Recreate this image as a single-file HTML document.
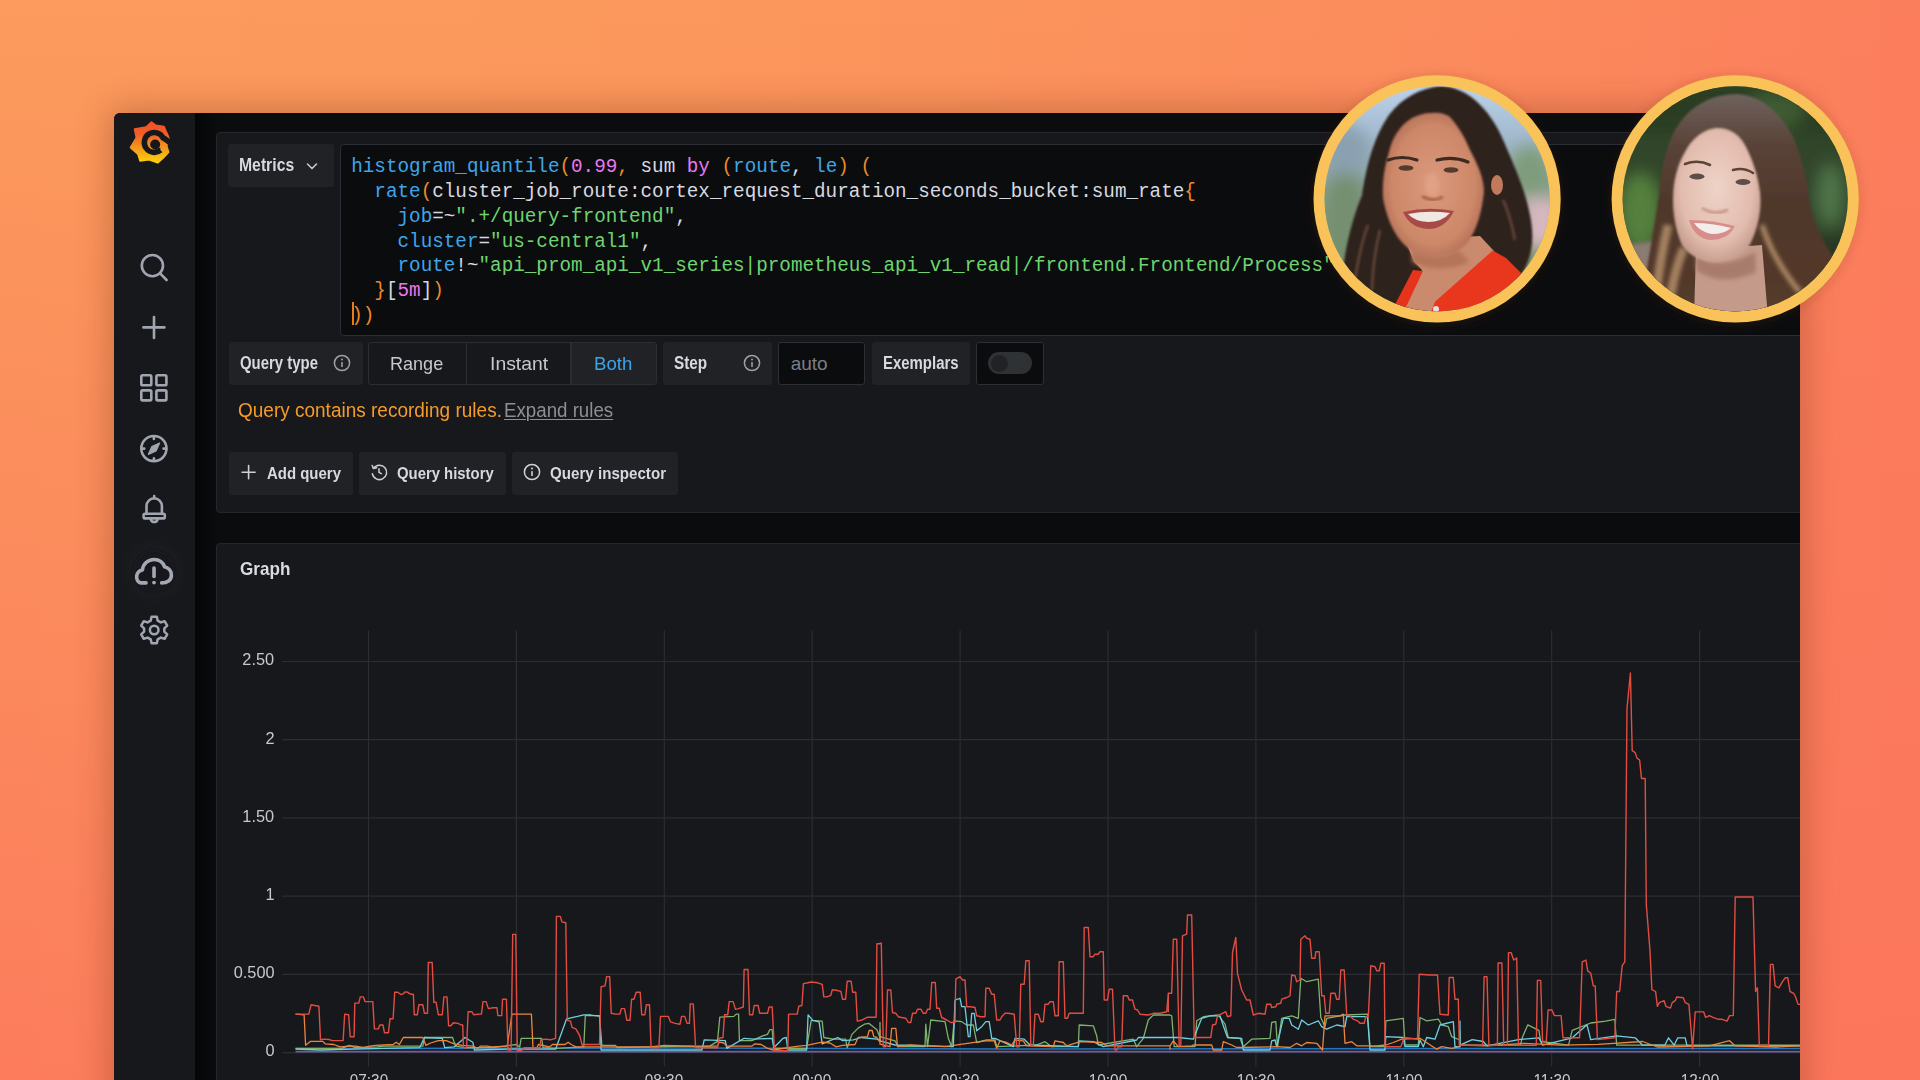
<!DOCTYPE html>
<html><head><meta charset="utf-8">
<style>
*{margin:0;padding:0;box-sizing:border-box}
html,body{width:1920px;height:1080px;overflow:hidden}
body{position:relative;font-family:"Liberation Sans",sans-serif;background:linear-gradient(to bottom right,#fa985c 0%,#fb8b5c 28%,#fc7f5c 52%,#fb775b 100%)}
.b{position:absolute}
.t{position:absolute;white-space:pre}
#code .f{color:#3ea6e8} #code .o{color:#ec8a2a} #code .n{color:#e979ee} #code .s{color:#6fd46e}
</style></head><body>
<svg class="b" style="left:0;top:0" width="1920" height="1080"><defs><linearGradient id="g0" x1="0" y1="0" x2="0" y2="1"><stop offset="0" stop-color="rgb(251,155,92)"/><stop offset="1" stop-color="rgb(252,124,92)"/></linearGradient><linearGradient id="g1" x1="0" y1="0" x2="0" y2="1"><stop offset="0" stop-color="rgb(251,155,92)"/><stop offset="1" stop-color="rgb(252,125,92)"/></linearGradient><linearGradient id="g2" x1="0" y1="0" x2="0" y2="1"><stop offset="0" stop-color="rgb(251,155,92)"/><stop offset="1" stop-color="rgb(252,125,92)"/></linearGradient><linearGradient id="g3" x1="0" y1="0" x2="0" y2="1"><stop offset="0" stop-color="rgb(251,155,92)"/><stop offset="1" stop-color="rgb(252,126,92)"/></linearGradient><linearGradient id="g4" x1="0" y1="0" x2="0" y2="1"><stop offset="0" stop-color="rgb(251,155,92)"/><stop offset="1" stop-color="rgb(252,126,92)"/></linearGradient><linearGradient id="g5" x1="0" y1="0" x2="0" y2="1"><stop offset="0" stop-color="rgb(251,155,92)"/><stop offset="1" stop-color="rgb(252,126,92)"/></linearGradient><linearGradient id="g6" x1="0" y1="0" x2="0" y2="1"><stop offset="0" stop-color="rgb(251,154,92)"/><stop offset="1" stop-color="rgb(252,127,92)"/></linearGradient><linearGradient id="g7" x1="0" y1="0" x2="0" y2="1"><stop offset="0" stop-color="rgb(251,154,92)"/><stop offset="1" stop-color="rgb(252,127,92)"/></linearGradient><linearGradient id="g8" x1="0" y1="0" x2="0" y2="1"><stop offset="0" stop-color="rgb(251,154,92)"/><stop offset="1" stop-color="rgb(252,128,92)"/></linearGradient><linearGradient id="g9" x1="0" y1="0" x2="0" y2="1"><stop offset="0" stop-color="rgb(251,154,92)"/><stop offset="1" stop-color="rgb(252,128,92)"/></linearGradient><linearGradient id="g10" x1="0" y1="0" x2="0" y2="1"><stop offset="0" stop-color="rgb(251,154,92)"/><stop offset="1" stop-color="rgb(252,128,92)"/></linearGradient><linearGradient id="g11" x1="0" y1="0" x2="0" y2="1"><stop offset="0" stop-color="rgb(251,154,92)"/><stop offset="1" stop-color="rgb(252,128,92)"/></linearGradient><linearGradient id="g12" x1="0" y1="0" x2="0" y2="1"><stop offset="0" stop-color="rgb(251,153,92)"/><stop offset="1" stop-color="rgb(252,129,92)"/></linearGradient><linearGradient id="g13" x1="0" y1="0" x2="0" y2="1"><stop offset="0" stop-color="rgb(251,153,92)"/><stop offset="1" stop-color="rgb(252,129,92)"/></linearGradient><linearGradient id="g14" x1="0" y1="0" x2="0" y2="1"><stop offset="0" stop-color="rgb(251,153,92)"/><stop offset="1" stop-color="rgb(252,129,92)"/></linearGradient><linearGradient id="g15" x1="0" y1="0" x2="0" y2="1"><stop offset="0" stop-color="rgb(251,152,92)"/><stop offset="1" stop-color="rgb(252,129,92)"/></linearGradient><linearGradient id="g16" x1="0" y1="0" x2="0" y2="1"><stop offset="0" stop-color="rgb(251,152,92)"/><stop offset="1" stop-color="rgb(252,129,92)"/></linearGradient><linearGradient id="g17" x1="0" y1="0" x2="0" y2="1"><stop offset="0" stop-color="rgb(251,152,92)"/><stop offset="1" stop-color="rgb(252,129,92)"/></linearGradient><linearGradient id="g18" x1="0" y1="0" x2="0" y2="1"><stop offset="0" stop-color="rgb(251,151,92)"/><stop offset="1" stop-color="rgb(252,129,92)"/></linearGradient><linearGradient id="g19" x1="0" y1="0" x2="0" y2="1"><stop offset="0" stop-color="rgb(251,151,92)"/><stop offset="1" stop-color="rgb(252,129,92)"/></linearGradient><linearGradient id="g20" x1="0" y1="0" x2="0" y2="1"><stop offset="0" stop-color="rgb(251,150,92)"/><stop offset="1" stop-color="rgb(252,129,92)"/></linearGradient><linearGradient id="g21" x1="0" y1="0" x2="0" y2="1"><stop offset="0" stop-color="rgb(251,150,92)"/><stop offset="1" stop-color="rgb(252,129,92)"/></linearGradient><linearGradient id="g22" x1="0" y1="0" x2="0" y2="1"><stop offset="0" stop-color="rgb(251,149,92)"/><stop offset="1" stop-color="rgb(252,129,92)"/></linearGradient><linearGradient id="g23" x1="0" y1="0" x2="0" y2="1"><stop offset="0" stop-color="rgb(251,149,92)"/><stop offset="1" stop-color="rgb(252,129,92)"/></linearGradient><linearGradient id="g24" x1="0" y1="0" x2="0" y2="1"><stop offset="0" stop-color="rgb(251,148,92)"/><stop offset="1" stop-color="rgb(252,129,92)"/></linearGradient><linearGradient id="g25" x1="0" y1="0" x2="0" y2="1"><stop offset="0" stop-color="rgb(251,147,92)"/><stop offset="1" stop-color="rgb(252,129,92)"/></linearGradient><linearGradient id="g26" x1="0" y1="0" x2="0" y2="1"><stop offset="0" stop-color="rgb(251,147,92)"/><stop offset="1" stop-color="rgb(252,128,92)"/></linearGradient><linearGradient id="g27" x1="0" y1="0" x2="0" y2="1"><stop offset="0" stop-color="rgb(251,146,92)"/><stop offset="1" stop-color="rgb(252,128,92)"/></linearGradient><linearGradient id="g28" x1="0" y1="0" x2="0" y2="1"><stop offset="0" stop-color="rgb(251,145,92)"/><stop offset="1" stop-color="rgb(252,128,92)"/></linearGradient><linearGradient id="g29" x1="0" y1="0" x2="0" y2="1"><stop offset="0" stop-color="rgb(251,145,92)"/><stop offset="1" stop-color="rgb(252,128,92)"/></linearGradient><linearGradient id="g30" x1="0" y1="0" x2="0" y2="1"><stop offset="0" stop-color="rgb(251,144,92)"/><stop offset="1" stop-color="rgb(252,127,92)"/></linearGradient><linearGradient id="g31" x1="0" y1="0" x2="0" y2="1"><stop offset="0" stop-color="rgb(251,143,92)"/><stop offset="1" stop-color="rgb(252,127,92)"/></linearGradient><linearGradient id="g32" x1="0" y1="0" x2="0" y2="1"><stop offset="0" stop-color="rgb(251,142,92)"/><stop offset="1" stop-color="rgb(252,127,92)"/></linearGradient><linearGradient id="g33" x1="0" y1="0" x2="0" y2="1"><stop offset="0" stop-color="rgb(251,141,92)"/><stop offset="1" stop-color="rgb(252,126,92)"/></linearGradient><linearGradient id="g34" x1="0" y1="0" x2="0" y2="1"><stop offset="0" stop-color="rgb(251,141,92)"/><stop offset="1" stop-color="rgb(252,126,92)"/></linearGradient><linearGradient id="g35" x1="0" y1="0" x2="0" y2="1"><stop offset="0" stop-color="rgb(251,140,92)"/><stop offset="1" stop-color="rgb(252,125,92)"/></linearGradient><linearGradient id="g36" x1="0" y1="0" x2="0" y2="1"><stop offset="0" stop-color="rgb(251,139,92)"/><stop offset="1" stop-color="rgb(252,125,92)"/></linearGradient><linearGradient id="g37" x1="0" y1="0" x2="0" y2="1"><stop offset="0" stop-color="rgb(251,138,92)"/><stop offset="1" stop-color="rgb(252,124,92)"/></linearGradient><linearGradient id="g38" x1="0" y1="0" x2="0" y2="1"><stop offset="0" stop-color="rgb(251,137,92)"/><stop offset="1" stop-color="rgb(252,124,92)"/></linearGradient><linearGradient id="g39" x1="0" y1="0" x2="0" y2="1"><stop offset="0" stop-color="rgb(251,136,92)"/><stop offset="1" stop-color="rgb(252,123,92)"/></linearGradient><linearGradient id="g40" x1="0" y1="0" x2="0" y2="1"><stop offset="0" stop-color="rgb(251,135,92)"/><stop offset="1" stop-color="rgb(252,123,92)"/></linearGradient><linearGradient id="g41" x1="0" y1="0" x2="0" y2="1"><stop offset="0" stop-color="rgb(251,134,92)"/><stop offset="1" stop-color="rgb(252,122,92)"/></linearGradient><linearGradient id="g42" x1="0" y1="0" x2="0" y2="1"><stop offset="0" stop-color="rgb(251,132,92)"/><stop offset="1" stop-color="rgb(252,121,92)"/></linearGradient><linearGradient id="g43" x1="0" y1="0" x2="0" y2="1"><stop offset="0" stop-color="rgb(251,131,92)"/><stop offset="1" stop-color="rgb(252,121,92)"/></linearGradient><linearGradient id="g44" x1="0" y1="0" x2="0" y2="1"><stop offset="0" stop-color="rgb(251,130,92)"/><stop offset="1" stop-color="rgb(252,120,92)"/></linearGradient><linearGradient id="g45" x1="0" y1="0" x2="0" y2="1"><stop offset="0" stop-color="rgb(251,129,92)"/><stop offset="1" stop-color="rgb(252,119,92)"/></linearGradient><linearGradient id="g46" x1="0" y1="0" x2="0" y2="1"><stop offset="0" stop-color="rgb(251,128,92)"/><stop offset="1" stop-color="rgb(252,118,92)"/></linearGradient><linearGradient id="g47" x1="0" y1="0" x2="0" y2="1"><stop offset="0" stop-color="rgb(251,126,92)"/><stop offset="1" stop-color="rgb(252,118,92)"/></linearGradient></defs><rect x="-0.5" y="0" width="41.0" height="1080" fill="url(#g0)"/><rect x="39.5" y="0" width="41.0" height="1080" fill="url(#g1)"/><rect x="79.5" y="0" width="41.0" height="1080" fill="url(#g2)"/><rect x="119.5" y="0" width="41.0" height="1080" fill="url(#g3)"/><rect x="159.5" y="0" width="41.0" height="1080" fill="url(#g4)"/><rect x="199.5" y="0" width="41.0" height="1080" fill="url(#g5)"/><rect x="239.5" y="0" width="41.0" height="1080" fill="url(#g6)"/><rect x="279.5" y="0" width="41.0" height="1080" fill="url(#g7)"/><rect x="319.5" y="0" width="41.0" height="1080" fill="url(#g8)"/><rect x="359.5" y="0" width="41.0" height="1080" fill="url(#g9)"/><rect x="399.5" y="0" width="41.0" height="1080" fill="url(#g10)"/><rect x="439.5" y="0" width="41.0" height="1080" fill="url(#g11)"/><rect x="479.5" y="0" width="41.0" height="1080" fill="url(#g12)"/><rect x="519.5" y="0" width="41.0" height="1080" fill="url(#g13)"/><rect x="559.5" y="0" width="41.0" height="1080" fill="url(#g14)"/><rect x="599.5" y="0" width="41.0" height="1080" fill="url(#g15)"/><rect x="639.5" y="0" width="41.0" height="1080" fill="url(#g16)"/><rect x="679.5" y="0" width="41.0" height="1080" fill="url(#g17)"/><rect x="719.5" y="0" width="41.0" height="1080" fill="url(#g18)"/><rect x="759.5" y="0" width="41.0" height="1080" fill="url(#g19)"/><rect x="799.5" y="0" width="41.0" height="1080" fill="url(#g20)"/><rect x="839.5" y="0" width="41.0" height="1080" fill="url(#g21)"/><rect x="879.5" y="0" width="41.0" height="1080" fill="url(#g22)"/><rect x="919.5" y="0" width="41.0" height="1080" fill="url(#g23)"/><rect x="959.5" y="0" width="41.0" height="1080" fill="url(#g24)"/><rect x="999.5" y="0" width="41.0" height="1080" fill="url(#g25)"/><rect x="1039.5" y="0" width="41.0" height="1080" fill="url(#g26)"/><rect x="1079.5" y="0" width="41.0" height="1080" fill="url(#g27)"/><rect x="1119.5" y="0" width="41.0" height="1080" fill="url(#g28)"/><rect x="1159.5" y="0" width="41.0" height="1080" fill="url(#g29)"/><rect x="1199.5" y="0" width="41.0" height="1080" fill="url(#g30)"/><rect x="1239.5" y="0" width="41.0" height="1080" fill="url(#g31)"/><rect x="1279.5" y="0" width="41.0" height="1080" fill="url(#g32)"/><rect x="1319.5" y="0" width="41.0" height="1080" fill="url(#g33)"/><rect x="1359.5" y="0" width="41.0" height="1080" fill="url(#g34)"/><rect x="1399.5" y="0" width="41.0" height="1080" fill="url(#g35)"/><rect x="1439.5" y="0" width="41.0" height="1080" fill="url(#g36)"/><rect x="1479.5" y="0" width="41.0" height="1080" fill="url(#g37)"/><rect x="1519.5" y="0" width="41.0" height="1080" fill="url(#g38)"/><rect x="1559.5" y="0" width="41.0" height="1080" fill="url(#g39)"/><rect x="1599.5" y="0" width="41.0" height="1080" fill="url(#g40)"/><rect x="1639.5" y="0" width="41.0" height="1080" fill="url(#g41)"/><rect x="1679.5" y="0" width="41.0" height="1080" fill="url(#g42)"/><rect x="1719.5" y="0" width="41.0" height="1080" fill="url(#g43)"/><rect x="1759.5" y="0" width="41.0" height="1080" fill="url(#g44)"/><rect x="1799.5" y="0" width="41.0" height="1080" fill="url(#g45)"/><rect x="1839.5" y="0" width="41.0" height="1080" fill="url(#g46)"/><rect x="1879.5" y="0" width="41.0" height="1080" fill="url(#g47)"/></svg>
<div class="b" style="left:114px;top:113px;width:1686px;height:1000px;border-radius:6px 0 0 0;box-shadow:0 0 34px 4px rgba(110,45,15,.33)"></div>
<div class="b" style="left:0;top:0;width:1800px;height:1080px;overflow:hidden">
<div class="b" style="left:114px;top:113px;width:1686px;height:1000px;background:#0b0c0e;border-radius:6px 0 0 0"></div>
<div class="b" style="left:114px;top:113px;width:80.5px;height:1000px;background:#17181c;border-radius:6px 0 0 0"></div>
<div class="b" style="left:194.5px;top:113px;width:24px;height:1000px;background:linear-gradient(to right,#040505,#090a0c 60%,#0b0c0e)"></div>
<div class="b" style="left:216px;top:131.5px;width:1600px;height:381.5px;background:#17181c;border:1px solid #25272b;border-radius:4px"></div>
<div class="b" style="left:228px;top:143.5px;width:106px;height:43.5px;background:#202226;border-radius:3px"></div>
<div class="t" style="left:238.5px;top:157.49px;font-size:17.5px;line-height:17.5px;color:#d8d9e0;font-weight:bold;font-family:'Liberation Sans';transform:scaleX(0.9);transform-origin:0 0;">Metrics</div>
<svg class="b" style="left:304px;top:158px" width="16" height="16" viewBox="0 0 16 16"><path d="M3.5 6 L8 10.5 L12.5 6" stroke="#c7c8cf" stroke-width="1.6" fill="none" stroke-linecap="round" stroke-linejoin="round"/></svg>
<div class="b" style="left:340px;top:143.5px;width:1470px;height:192px;background:#0b0c0e;border:1.5px solid #2a2d33;border-radius:4px"></div>
<div class="b" style="left:351.2px;top:155px;font-family:'Liberation Mono';font-size:19.3px;line-height:24.85px;white-space:pre;color:#d8d9e0" id="code"><span class="f">histogram_quantile</span><span class="o">(</span><span class="n">0.99</span><span class="o">,</span> sum <span class="n">by</span> <span class="o">(</span><span class="f">route</span>, <span class="f">le</span><span class="o">)</span> <span class="o">(</span>
  <span class="f">rate</span><span class="o">(</span>cluster_job_route:cortex_request_duration_seconds_bucket:sum_rate<span class="o">{</span>
    <span class="f">job</span>=~<span class="s">".+/query-frontend"</span>,
    <span class="f">cluster</span>=<span class="s">"us-central1"</span>,
    <span class="f">route</span>!~<span class="s">"api_prom_api_v1_series|prometheus_api_v1_read|/frontend.Frontend/Process"</span>
  <span class="o">}</span>[<span class="n">5m</span>]<span class="o">)</span>
<span class="o">))</span></div>
<div class="b" style="left:352px;top:302px;width:1.6px;height:23px;background:#eb7b18"></div>
<div class="b" style="left:228.5px;top:341.5px;width:134px;height:43.5px;background:#202226;border-radius:3px"></div>
<div class="t" style="left:239.6px;top:354.06px;font-size:18px;line-height:18px;color:#d8d9e0;font-weight:bold;font-family:'Liberation Sans';transform:scaleX(0.83);transform-origin:0 0;">Query type</div>
<svg class="b" style="left:332.1px;top:353.2px" width="20" height="20" viewBox="0 0 20 20"><circle cx="10" cy="10" r="7.6" stroke="#9fa0a7" stroke-width="1.5" fill="none"/><rect x="9.2" y="9" width="1.6" height="5" rx=".6" fill="#9fa0a7"/><circle cx="10" cy="6.6" r="1" fill="#9fa0a7"/></svg>
<div class="b" style="left:367.5px;top:341.5px;width:289px;height:43.5px;background:#17181c;border:1.5px solid #2a2d32;border-radius:3px"></div>
<div class="b" style="left:571px;top:343px;width:84.5px;height:40.5px;background:#202226;border-radius:0 2px 2px 0"></div>
<div class="b" style="left:465.8px;top:343px;width:1.5px;height:40.5px;background:#2a2d32"></div>
<div class="b" style="left:570.3px;top:343px;width:1.5px;height:40.5px;background:#2a2d32"></div>
<div class="t" style="left:390.3px;top:353.92px;font-size:19px;line-height:19px;color:#c7c8d0;font-weight:normal;font-family:'Liberation Sans';transform:scaleX(0.95);transform-origin:0 0;">Range</div>
<div class="t" style="left:490px;top:353.92px;font-size:19px;line-height:19px;color:#c7c8d0;font-weight:normal;font-family:'Liberation Sans';transform:scaleX(1.02);transform-origin:0 0;">Instant</div>
<div class="t" style="left:593.8px;top:353.92px;font-size:19px;line-height:19px;color:#3ba4ea;font-weight:normal;font-family:'Liberation Sans';transform:scaleX(0.98);transform-origin:0 0;">Both</div>
<div class="b" style="left:663px;top:341.5px;width:109px;height:43.5px;background:#202226;border-radius:3px"></div>
<div class="t" style="left:673.7px;top:354.06px;font-size:18px;line-height:18px;color:#d8d9e0;font-weight:bold;font-family:'Liberation Sans';transform:scaleX(0.85);transform-origin:0 0;">Step</div>
<svg class="b" style="left:741.7px;top:353.2px" width="20" height="20" viewBox="0 0 20 20"><circle cx="10" cy="10" r="7.6" stroke="#9fa0a7" stroke-width="1.5" fill="none"/><rect x="9.2" y="9" width="1.6" height="5" rx=".6" fill="#9fa0a7"/><circle cx="10" cy="6.6" r="1" fill="#9fa0a7"/></svg>
<div class="b" style="left:778.3px;top:341.5px;width:87.2px;height:43.5px;background:#0b0c0e;border:1.5px solid #2c2f35;border-radius:3px"></div>
<div class="t" style="left:790.7px;top:353.92px;font-size:19px;line-height:19px;color:#7d7f86;font-weight:normal;font-family:'Liberation Sans';">auto</div>
<div class="b" style="left:872px;top:341.5px;width:98px;height:43.5px;background:#202226;border-radius:3px"></div>
<div class="t" style="left:882.8px;top:354.06px;font-size:18px;line-height:18px;color:#d8d9e0;font-weight:bold;font-family:'Liberation Sans';transform:scaleX(0.83);transform-origin:0 0;">Exemplars</div>
<div class="b" style="left:976.3px;top:341.5px;width:68px;height:43.5px;background:#0b0c0e;border:1.5px solid #2c2f35;border-radius:3px"></div>
<div class="b" style="left:988px;top:352.3px;width:44.3px;height:22px;background:#2e3235;border-radius:11px"></div>
<div class="b" style="left:990.8px;top:354.8px;width:17px;height:17px;background:#202226;border-radius:50%"></div>
<div class="t" style="left:238.3px;top:400.76px;font-size:19.3px;line-height:19.3px;color:#f49b2a;font-weight:normal;font-family:'Liberation Sans';transform:scaleX(0.985);transform-origin:0 0;">Query contains recording rules.</div>
<div class="t" style="left:503.6px;top:400.76px;font-size:19.3px;line-height:19.3px;color:#8e8f96;font-weight:normal;font-family:'Liberation Sans';transform:scaleX(0.97);transform-origin:0 0;text-decoration:underline;text-decoration-thickness:1.3px;text-underline-offset:2px;">Expand rules</div>
<div class="b" style="left:228.5px;top:451.8px;width:124.5px;height:43.4px;background:#202226;border-radius:3px"></div>
<svg class="b" style="left:240px;top:463px" width="18" height="18" viewBox="0 0 18 18"><path d="M8.6 2.6V15.8M2.1 9.2H15.1" stroke="#cfd0d7" stroke-width="1.6" stroke-linecap="round"/></svg>
<div class="t" style="left:266.6px;top:464.51px;font-size:17px;line-height:17px;color:#d8d9e0;font-weight:bold;font-family:'Liberation Sans';transform:scaleX(0.88);transform-origin:0 0;">Add query</div>
<div class="b" style="left:359.2px;top:451.8px;width:146.5px;height:43.4px;background:#202226;border-radius:3px"></div>
<svg class="b" style="left:369px;top:462px" width="20" height="20" viewBox="0 0 20 20"><path d="M4.6 6.2 A7.2 7.2 0 1 1 3.4 11.8" stroke="#cfd0d7" stroke-width="1.5" fill="none" stroke-linecap="round"/><path d="M3.2 3.4 L4.4 6.6 L7.6 5.8" stroke="#cfd0d7" stroke-width="1.5" fill="none" stroke-linecap="round" stroke-linejoin="round"/><path d="M10 6.8V10.3L12.3 11.6" stroke="#cfd0d7" stroke-width="1.5" fill="none" stroke-linecap="round"/></svg>
<div class="t" style="left:396.7px;top:464.51px;font-size:17px;line-height:17px;color:#d8d9e0;font-weight:bold;font-family:'Liberation Sans';transform:scaleX(0.875);transform-origin:0 0;">Query history</div>
<div class="b" style="left:511.5px;top:451.8px;width:166px;height:43.4px;background:#202226;border-radius:3px"></div>
<svg class="b" style="left:521.8px;top:462.2px" width="20" height="20" viewBox="0 0 20 20"><circle cx="10" cy="10" r="7.6" stroke="#cfd0d7" stroke-width="1.5" fill="none"/><rect x="9.2" y="9" width="1.6" height="5" rx=".6" fill="#cfd0d7"/><circle cx="10" cy="6.6" r="1" fill="#cfd0d7"/></svg>
<div class="t" style="left:550px;top:464.51px;font-size:17px;line-height:17px;color:#d8d9e0;font-weight:bold;font-family:'Liberation Sans';transform:scaleX(0.89);transform-origin:0 0;">Query inspector</div>
<div class="b" style="left:216px;top:542.5px;width:1600px;height:600px;background:#17181c;border:1px solid #25272b;border-radius:4px"></div>
<div class="t" style="left:239.6px;top:559.12px;font-size:19px;line-height:19px;color:#d8dbe3;font-weight:bold;font-family:'Liberation Sans';transform:scaleX(0.9);transform-origin:0 0;">Graph</div>
<div class="t" style="right:1525.5px;top:651.3px;font-size:17px;line-height:17px;color:#c7c8cf;transform:scaleX(0.96);transform-origin:100% 0">2.50</div>
<div class="t" style="right:1525.5px;top:729.5px;font-size:17px;line-height:17px;color:#c7c8cf;transform:scaleX(0.96);transform-origin:100% 0">2</div>
<div class="t" style="right:1525.5px;top:807.7px;font-size:17px;line-height:17px;color:#c7c8cf;transform:scaleX(0.96);transform-origin:100% 0">1.50</div>
<div class="t" style="right:1525.5px;top:886.0px;font-size:17px;line-height:17px;color:#c7c8cf;transform:scaleX(0.96);transform-origin:100% 0">1</div>
<div class="t" style="right:1525.5px;top:964.2px;font-size:17px;line-height:17px;color:#c7c8cf;transform:scaleX(0.96);transform-origin:100% 0">0.500</div>
<div class="t" style="right:1525.5px;top:1042.4px;font-size:17px;line-height:17px;color:#c7c8cf;transform:scaleX(0.96);transform-origin:100% 0">0</div>
<div class="t" style="left:338.5px;width:60px;text-align:center;top:1072px;font-size:17px;line-height:17px;color:#c7c8cf;transform:scaleX(0.9)">07:30</div>
<div class="t" style="left:486.4px;width:60px;text-align:center;top:1072px;font-size:17px;line-height:17px;color:#c7c8cf;transform:scaleX(0.9)">08:00</div>
<div class="t" style="left:634.3px;width:60px;text-align:center;top:1072px;font-size:17px;line-height:17px;color:#c7c8cf;transform:scaleX(0.9)">08:30</div>
<div class="t" style="left:782.2px;width:60px;text-align:center;top:1072px;font-size:17px;line-height:17px;color:#c7c8cf;transform:scaleX(0.9)">09:00</div>
<div class="t" style="left:930.1px;width:60px;text-align:center;top:1072px;font-size:17px;line-height:17px;color:#c7c8cf;transform:scaleX(0.9)">09:30</div>
<div class="t" style="left:1078px;width:60px;text-align:center;top:1072px;font-size:17px;line-height:17px;color:#c7c8cf;transform:scaleX(0.9)">10:00</div>
<div class="t" style="left:1225.9px;width:60px;text-align:center;top:1072px;font-size:17px;line-height:17px;color:#c7c8cf;transform:scaleX(0.9)">10:30</div>
<div class="t" style="left:1373.8px;width:60px;text-align:center;top:1072px;font-size:17px;line-height:17px;color:#c7c8cf;transform:scaleX(0.9)">11:00</div>
<div class="t" style="left:1521.7px;width:60px;text-align:center;top:1072px;font-size:17px;line-height:17px;color:#c7c8cf;transform:scaleX(0.9)">11:30</div>
<div class="t" style="left:1669.6px;width:60px;text-align:center;top:1072px;font-size:17px;line-height:17px;color:#c7c8cf;transform:scaleX(0.9)">12:00</div>
<svg class="b" style="left:0;top:0" width="1800" height="1080" viewBox="0 0 1800 1080"><line x1="282" y1="661.5" x2="1800" y2="661.5" stroke="#2a2d31" stroke-width="1.2"/><line x1="282" y1="739.7" x2="1800" y2="739.7" stroke="#2a2d31" stroke-width="1.2"/><line x1="282" y1="817.9" x2="1800" y2="817.9" stroke="#2a2d31" stroke-width="1.2"/><line x1="282" y1="896.2" x2="1800" y2="896.2" stroke="#2a2d31" stroke-width="1.2"/><line x1="282" y1="974.4" x2="1800" y2="974.4" stroke="#2a2d31" stroke-width="1.2"/><line x1="282" y1="1052.6" x2="1800" y2="1052.6" stroke="#2a2d31" stroke-width="1.2"/><line x1="368.5" y1="630.6" x2="368.5" y2="1066.6" stroke="#2a2d31" stroke-width="1.2"/><line x1="516.4" y1="630.6" x2="516.4" y2="1066.6" stroke="#2a2d31" stroke-width="1.2"/><line x1="664.3" y1="630.6" x2="664.3" y2="1066.6" stroke="#2a2d31" stroke-width="1.2"/><line x1="812.2" y1="630.6" x2="812.2" y2="1066.6" stroke="#2a2d31" stroke-width="1.2"/><line x1="960.1" y1="630.6" x2="960.1" y2="1066.6" stroke="#2a2d31" stroke-width="1.2"/><line x1="1108" y1="630.6" x2="1108" y2="1066.6" stroke="#2a2d31" stroke-width="1.2"/><line x1="1255.9" y1="630.6" x2="1255.9" y2="1066.6" stroke="#2a2d31" stroke-width="1.2"/><line x1="1403.8" y1="630.6" x2="1403.8" y2="1066.6" stroke="#2a2d31" stroke-width="1.2"/><line x1="1551.7" y1="630.6" x2="1551.7" y2="1066.6" stroke="#2a2d31" stroke-width="1.2"/><line x1="1699.6" y1="630.6" x2="1699.6" y2="1066.6" stroke="#2a2d31" stroke-width="1.2"/><path d="M295.5,1051.6 L1800,1051.6" stroke="#705da0" stroke-width="1.6" fill="none" stroke-linejoin="round"/>
<path d="M295.5,1048.5 L700,1048 L1000,1049 L1500,1048.5 L1800,1048.5" stroke="#1f78c1" stroke-width="1.4" fill="none" stroke-linejoin="round"/>
<path d="M295.5,1048.4 L341.6,1048.4 L349.4,1045.3 L355.6,1047.7 L377.5,1046.9 L383.8,1046.1 L422.8,1046.1 L424.4,1037.5 L452.5,1037.5 L455.6,1046.1 L465.0,1047.7 L493.1,1047.7 L516.6,1044.5 L519.7,1046.9 L521.2,1038.3 L541.6,1038.3 L543.1,1047.7 L555.6,1048.4 L583.8,1046.9 L585.3,1015.6 L590.0,1015.6 L590.0,1014.8 L599.5,1016.4 L601.9,1045.3 L615.2,1045.3 L617.5,1047.7 L689.4,1046.1 L698.8,1046.9 L709.7,1046.1 L717.5,1041.4 L719.8,1017.2 L733.9,1016.4 L736.2,1014.1 L738.6,1014.1 L739.4,1040.6 L751.9,1040.6 L762.8,1035.9 L767.5,1034.4 L769.8,1029.7 L772.2,1029.7 L773.8,1048.4 L806.6,1048.4 L811.2,1020.3 L822.2,1021.1 L823.8,1037.5 L833.1,1039.1 L845.6,1039.1 L847.2,1047.7 L851.9,1034.4 L858.1,1028.1 L864.4,1024.2 L869.1,1023.4 L873.8,1027.3 L876.9,1029.7 L880.0,1037.5 L880.0,1022.5 L880.0,1025.8 L880.0,1036.7 L895.0,1040.8 L898.3,1046.7 L925.0,1046.7 L925.8,1024.2 L927.5,1046.7 L930.8,1020.0 L945.0,1021.7 L948.3,1038.3 L951.7,1046.7 L954.2,1020.8 L961.7,1021.7 L966.7,1025.0 L973.3,1025.0 L976.7,1042.5 L986.7,1040.0 L995.0,1040.0 L996.7,1046.7 L1036.7,1045.0 L1045.0,1041.7 L1051.7,1046.7 L1078.3,1046.7 L1079.2,1025.0 L1093.3,1025.8 L1096.7,1035.8 L1098.3,1045.0 L1133.3,1039.2 L1136.7,1046.7 L1143.3,1038.3 L1148.3,1020.0 L1153.3,1015.0 L1170.0,1015.0 L1170.0,1015.0 L1171.7,1015.8 L1174.2,1046.7 L1195.0,1046.7 L1196.7,1020.8 L1203.3,1016.7 L1218.3,1015.0 L1225.0,1024.2 L1228.3,1037.5 L1240.0,1038.3 L1243.3,1046.7 L1251.7,1039.2 L1270.0,1038.3 L1271.7,1022.5 L1275.8,1021.7 L1277.5,1046.7 L1281.7,1018.3 L1291.7,1015.8 L1298.3,1018.3 L1300.8,978.3 L1306.7,981.7 L1318.3,979.2 L1320.8,1017.5 L1325.0,1026.7 L1326.7,1018.3 L1345.0,1015.0 L1367.5,1014.2 L1370.0,1046.7 L1385.0,1046.7 L1385.8,1020.8 L1403.3,1018.3 L1405.0,1045.0 L1418.3,1045.0 L1420.0,1017.5 L1426.7,1020.8 L1438.3,1019.2 L1441.7,1025.0 L1448.3,1026.7 L1451.7,1036.7 L1460.0,1040.0 L1460.0,1030.4 L1460.0,1045.2 L1520.4,1045.2 L1522.2,1037.8 L1527.8,1024.8 L1538.9,1030.4 L1540.7,1041.5 L1568.5,1045.2 L1572.2,1030.4 L1590.7,1023.0 L1605.6,1021.1 L1614.8,1019.3 L1616.7,1045.2 L1800.0,1045.2" stroke="#7eb26d" stroke-width="1.3" fill="none" stroke-linejoin="round"/>
<path d="M295.5,1049.2 L321.2,1050.0 L352.5,1049.2 L383.8,1048.4 L419.7,1047.7 L424.4,1037.5 L442.3,1038.3 L444.7,1047.7 L454.1,1046.9 L465.0,1037.5 L472.8,1042.2 L474.4,1050.0 L508.8,1049.2 L555.6,1049.2 L566.6,1018.8 L577.5,1016.4 L583.8,1014.8 L590.0,1014.8 L590.0,1015.6 L599.5,1015.6 L601.1,1050.0 L701.9,1050.0 L704.2,1039.8 L725.3,1040.6 L726.9,1048.4 L744.1,1038.3 L753.4,1039.1 L772.2,1038.3 L773.8,1047.7 L783.1,1038.3 L786.2,1037.5 L787.8,1050.0 L806.6,1050.0 L808.1,1014.8 L812.8,1020.3 L819.1,1021.9 L822.2,1043.8 L837.8,1037.5 L842.5,1040.6 L853.4,1039.8 L861.2,1037.5 L876.9,1039.1 L880.0,1040.6 L880.0,1036.7 L880.0,1040.8 L895.0,1045.0 L953.3,1046.7 L955.0,1000.0 L960.0,998.3 L961.7,1006.7 L965.0,1006.7 L968.3,1036.7 L970.0,1036.7 L971.7,1013.3 L974.2,1013.3 L976.7,1030.8 L981.7,1026.7 L985.8,1021.7 L989.2,1021.7 L991.7,1038.3 L995.0,1038.3 L1013.3,1046.7 L1015.0,1038.3 L1024.2,1039.2 L1030.0,1045.0 L1078.3,1046.7 L1079.2,1040.8 L1093.3,1041.7 L1103.3,1046.7 L1136.7,1040.0 L1138.3,1037.5 L1170.0,1037.5 L1170.0,1037.5 L1178.3,1037.5 L1193.3,1039.2 L1198.3,1026.7 L1201.7,1018.3 L1210.0,1015.8 L1220.0,1015.8 L1223.3,1025.8 L1227.5,1037.5 L1241.7,1038.3 L1243.3,1050.0 L1270.0,1050.0 L1271.7,1040.8 L1275.0,1040.0 L1276.7,1046.7 L1283.3,1018.3 L1289.2,1018.3 L1291.7,1025.0 L1298.3,1029.2 L1301.7,1020.0 L1308.3,1025.0 L1318.3,1020.8 L1321.7,1026.7 L1326.7,1029.2 L1336.7,1025.0 L1345.0,1026.7 L1346.7,1016.7 L1367.5,1016.7 L1370.0,1050.0 L1385.0,1050.0 L1385.8,1036.7 L1403.3,1037.5 L1405.0,1046.7 L1418.3,1046.7 L1420.0,1040.0 L1423.3,1046.7 L1426.7,1037.5 L1435.0,1039.2 L1440.0,1025.0 L1453.3,1021.7 L1455.0,1046.7 L1460.0,1046.7 L1460.0,1021.1 L1460.0,1045.2 L1472.2,1039.6 L1483.3,1041.5 L1487.0,1045.9 L1518.5,1039.6 L1538.9,1037.8 L1542.6,1045.2 L1572.2,1037.8 L1587.0,1024.8 L1590.7,1039.6 L1616.7,1035.9 L1635.2,1037.8 L1642.6,1045.2 L1664.8,1045.2 L1668.5,1037.8 L1674.1,1045.2 L1677.8,1037.8 L1685.2,1037.8 L1687.0,1045.9 L1800.0,1045.9" stroke="#6ed0e0" stroke-width="1.3" fill="none" stroke-linejoin="round"/>
<path d="M295.5,1014.1 L304.1,1014.8 L305.6,1045.3 L310.3,1041.4 L322.8,1041.4 L325.2,1043.8 L333.8,1044.5 L340.0,1046.9 L349.4,1046.1 L355.6,1046.1 L363.4,1047.7 L369.7,1046.1 L375.9,1045.3 L393.1,1044.5 L396.2,1042.2 L399.4,1044.5 L403.3,1037.5 L422.8,1037.5 L425.9,1045.3 L430.6,1043.0 L438.4,1040.6 L446.2,1040.6 L454.1,1043.8 L461.9,1045.3 L472.8,1046.1 L477.5,1048.4 L480.6,1046.1 L486.9,1046.1 L491.6,1046.9 L507.2,1046.1 L511.9,1014.1 L531.4,1014.1 L533.0,1047.7 L536.9,1047.7 L538.4,1044.5 L549.4,1046.9 L552.5,1044.5 L565.0,1044.5 L568.1,1042.2 L571.2,1044.5 L575.9,1046.9 L590.0,1046.9 L590.0,1046.9 L650.3,1046.9 L664.4,1045.3 L689.4,1046.1 L717.5,1046.1 L719.1,1042.2 L723.8,1043.0 L726.9,1046.1 L751.9,1046.1 L755.0,1043.8 L761.2,1044.5 L767.5,1048.4 L773.8,1050.0 L787.8,1047.7 L798.8,1046.1 L806.6,1045.3 L822.2,1042.2 L830.0,1043.0 L836.2,1046.9 L842.5,1045.3 L855.0,1044.5 L858.1,1037.5 L867.5,1036.7 L869.1,1030.5 L872.2,1030.5 L873.8,1036.7 L876.9,1037.5 L880.0,1042.2 L880.0,1030.0 L880.0,1037.5 L880.0,1044.2 L890.0,1046.7 L891.7,1028.3 L895.8,1028.3 L897.5,1046.7 L910.0,1045.0 L945.0,1046.7 L985.0,1040.8 L994.2,1040.8 L996.7,1048.3 L1000.0,1040.8 L1006.7,1042.5 L1011.7,1045.0 L1015.0,1040.0 L1023.3,1040.8 L1026.7,1045.8 L1053.3,1046.7 L1055.0,1040.8 L1063.3,1042.5 L1066.7,1045.8 L1080.0,1041.7 L1101.7,1042.5 L1106.7,1045.8 L1170.0,1045.8 L1170.0,1049.2 L1170.0,1045.8 L1173.3,1040.8 L1178.3,1046.7 L1191.7,1045.8 L1193.3,1045.0 L1211.7,1045.0 L1213.3,1050.0 L1221.7,1050.0 L1223.3,1041.7 L1231.7,1045.0 L1236.7,1047.5 L1276.7,1046.7 L1290.0,1047.5 L1296.7,1043.3 L1301.7,1045.8 L1306.7,1042.5 L1316.7,1043.3 L1322.5,1050.0 L1325.0,1015.8 L1340.0,1015.8 L1343.3,1014.2 L1345.0,1043.3 L1351.7,1041.7 L1356.7,1045.8 L1376.7,1045.8 L1385.8,1045.0 L1393.3,1042.5 L1401.7,1039.2 L1420.0,1038.3 L1436.7,1049.2 L1441.7,1046.7 L1451.7,1048.3 L1460.0,1046.7 L1460.0,1045.2 L1487.0,1045.9 L1524.1,1043.3 L1561.1,1045.2 L1598.1,1044.4 L1642.6,1041.5 L1657.4,1047.0 L1709.3,1045.9 L1729.6,1040.7 L1735.2,1045.9 L1775.9,1047.0 L1800.0,1045.9" stroke="#ef843c" stroke-width="1.3" fill="none" stroke-linejoin="round"/>
<path d="M295.5,1014.1 L308.8,1014.1 L311.1,1004.7 L315.0,1005.5 L318.9,1006.2 L320.5,1039.8 L324.4,1039.1 L329.1,1039.5 L332.2,1040.6 L343.1,1040.6 L344.7,1014.1 L348.6,1014.8 L350.2,1036.7 L354.1,1036.7 L354.8,1003.1 L358.8,1003.1 L360.3,996.9 L363.4,996.9 L365.0,1001.6 L372.8,1001.6 L374.4,1028.9 L378.3,1028.9 L379.8,1025.0 L383.0,1025.0 L384.5,1032.8 L388.4,1032.8 L390.0,1018.8 L393.1,1018.8 L394.7,992.2 L397.8,992.2 L400.9,994.5 L403.3,993.8 L404.8,991.9 L408.0,992.2 L409.5,993.8 L413.4,994.5 L414.2,1014.8 L417.3,1014.8 L418.9,1004.7 L422.8,1004.7 L424.4,1013.3 L427.5,1013.3 L428.3,962.5 L432.2,962.5 L433.8,1002.3 L436.1,1002.3 L438.4,1014.8 L442.3,1014.8 L443.9,996.9 L447.0,996.9 L448.6,1025.8 L450.9,1025.8 L453.3,1022.7 L458.0,1023.4 L461.1,1025.0 L462.7,1025.0 L463.4,1047.7 L466.6,1047.7 L468.1,1011.7 L472.0,1011.7 L473.6,1014.8 L479.1,1014.1 L481.4,1014.1 L483.0,1001.6 L486.1,1001.6 L488.4,1008.6 L493.1,1007.8 L497.0,1007.8 L497.8,1015.6 L501.7,1015.6 L502.5,999.2 L506.4,999.2 L508.0,1050.0 L511.1,1050.0 L512.7,934.4 L515.8,934.4 L517.3,1050.8 L521.2,1050.8 L524.4,1047.7 L540.0,1047.7 L540.8,1039.8 L545.5,1039.1 L550.2,1039.8 L555.6,1038.3 L556.4,916.4 L560.3,916.4 L561.9,921.9 L565.8,922.7 L567.3,1020.3 L570.5,1021.1 L572.0,1027.3 L575.9,1028.9 L579.8,1035.9 L582.2,1045.3 L582.2,1044.5 L599.5,1044.5 L601.1,986.7 L605.0,985.9 L606.6,976.6 L609.7,976.6 L611.2,1013.3 L615.9,1014.1 L619.8,1014.1 L621.4,1008.6 L624.5,1008.6 L626.9,1020.3 L630.0,1020.3 L631.6,999.2 L633.9,999.2 L636.2,992.2 L640.2,992.2 L641.7,1014.8 L644.8,1014.8 L646.4,1004.7 L649.5,1004.7 L651.1,1047.7 L658.9,1047.7 L660.5,1016.4 L668.3,1016.4 L670.6,1021.9 L675.3,1023.4 L680.0,1024.2 L681.6,1016.4 L684.7,1016.4 L687.0,1023.4 L689.4,1023.4 L690.2,1003.9 L693.3,1003.9 L695.6,1047.7 L717.5,1047.7 L719.1,1038.3 L723.0,1037.5 L724.5,1014.8 L727.7,1014.8 L729.2,1001.6 L733.1,1001.6 L735.5,1009.4 L738.6,1008.6 L743.3,1007.0 L744.1,969.5 L748.0,969.5 L749.5,1014.8 L752.7,1014.8 L754.2,1005.5 L758.1,1005.5 L759.7,1013.3 L767.5,1013.3 L769.1,1007.0 L772.2,1007.0 L774.5,1050.8 L787.8,1050.8 L788.6,1014.1 L797.2,1014.1 L798.8,1006.2 L801.9,1005.5 L803.4,983.6 L808.1,982.8 L811.2,982.0 L817.5,982.8 L822.2,984.4 L823.8,996.9 L826.9,996.9 L830.8,995.3 L832.3,989.8 L836.2,990.3 L840.9,991.4 L842.5,999.2 L845.6,999.2 L847.2,981.2 L851.1,981.2 L852.7,992.2 L855.8,992.2 L857.3,1021.1 L861.2,1020.3 L867.5,1017.2 L876.1,1017.2 L876.9,943.8 L880.0,943.8 L880.0,943.3 L881.3,943.3 L883.3,1046.7 L885.8,1046.7 L887.5,990.0 L890.8,990.0 L892.5,1012.5 L895.8,1013.3 L898.3,1016.7 L901.7,1017.5 L905.8,1018.3 L908.3,1022.5 L910.8,1022.5 L912.5,1013.3 L915.8,1013.3 L917.5,1009.2 L920.8,1009.2 L923.3,1013.3 L925.8,1013.3 L927.5,1009.2 L930.0,1009.2 L931.7,982.5 L935.3,982.5 L936.7,1008.3 L939.2,1008.3 L941.7,1017.5 L946.7,1020.0 L950.8,1022.5 L955.0,1022.5 L955.8,979.2 L960.0,976.7 L962.5,980.0 L965.0,980.0 L966.7,1006.7 L970.8,1006.7 L975.0,1007.5 L976.7,1015.8 L980.8,1016.7 L985.0,1016.7 L985.8,988.3 L989.2,988.3 L991.7,994.2 L994.2,994.2 L996.7,1020.0 L1000.0,1020.0 L1001.7,1016.7 L1005.0,1013.3 L1008.3,1013.3 L1014.2,1014.2 L1016.7,1046.7 L1019.2,1046.7 L1020.8,984.2 L1024.2,984.2 L1025.8,960.8 L1029.2,960.8 L1030.8,1045.8 L1033.3,1045.8 L1035.0,1014.2 L1038.3,1014.2 L1040.8,1021.7 L1043.3,1021.7 L1045.0,1004.2 L1048.3,1004.2 L1050.0,1001.7 L1053.3,1001.7 L1055.0,1015.8 L1058.3,1015.8 L1059.2,961.7 L1063.3,961.7 L1065.0,1018.3 L1067.5,1018.3 L1069.2,1013.3 L1083.3,1013.3 L1084.2,927.5 L1088.3,927.5 L1090.0,956.7 L1093.3,956.7 L1095.0,954.2 L1098.3,954.2 L1100.0,951.7 L1103.3,951.7 L1104.2,1000.0 L1107.5,1000.0 L1109.2,989.2 L1112.5,989.2 L1115.0,1050.0 L1116.7,1050.0 L1118.3,1046.7 L1121.7,1046.7 L1123.3,995.8 L1127.5,995.8 L1129.2,1000.0 L1132.5,1000.0 L1135.0,1009.2 L1137.5,1010.0 L1140.0,1014.2 L1148.3,1015.0 L1153.3,1013.3 L1160.0,1013.3 L1163.3,1012.5 L1166.7,1011.7 L1168.3,993.3 L1168.3,993.3 L1168.3,1011.7 L1168.3,993.3 L1171.7,993.3 L1173.3,939.2 L1176.7,939.2 L1179.2,1045.8 L1180.8,1045.8 L1182.5,935.8 L1186.7,934.2 L1187.5,915.0 L1191.7,915.0 L1194.2,1037.5 L1210.8,1037.5 L1212.5,1025.0 L1215.8,1024.2 L1217.5,1015.8 L1225.8,1011.7 L1227.5,1016.7 L1230.8,1015.8 L1232.5,952.5 L1235.8,937.5 L1237.5,973.3 L1241.7,990.0 L1246.7,1000.0 L1250.0,1000.0 L1253.3,1015.0 L1258.3,1013.3 L1265.0,1014.2 L1266.7,1004.2 L1270.8,1004.2 L1271.7,1007.5 L1275.8,1006.7 L1276.7,1004.2 L1280.8,1003.3 L1281.7,999.2 L1286.7,997.5 L1290.0,995.8 L1291.7,975.0 L1295.0,975.8 L1296.7,981.7 L1300.0,980.0 L1300.8,939.2 L1305.0,935.8 L1306.7,938.3 L1310.0,939.2 L1311.7,958.3 L1315.0,958.3 L1315.8,951.7 L1319.2,951.7 L1321.7,995.8 L1324.2,995.8 L1325.8,1013.3 L1329.2,1013.3 L1330.8,993.3 L1335.0,993.3 L1336.7,999.2 L1339.2,999.2 L1340.8,970.0 L1344.2,970.0 L1346.7,1015.0 L1350.0,1015.8 L1353.3,1019.2 L1357.5,1020.8 L1360.0,1023.3 L1364.2,1023.3 L1365.8,1016.7 L1368.3,1016.7 L1370.8,965.8 L1375.0,966.7 L1376.7,970.8 L1379.2,970.8 L1380.8,963.3 L1384.2,963.3 L1385.0,1046.7 L1400.8,1046.7 L1404.2,1037.5 L1417.5,1039.2 L1419.2,974.2 L1429.2,975.0 L1437.5,975.0 L1440.0,1014.2 L1448.3,1015.0 L1449.2,977.5 L1453.3,977.5 L1455.0,999.2 L1458.3,999.2 L1458.3,998.9 L1458.3,998.9 L1459.3,1045.2 L1482.6,1045.2 L1484.1,976.7 L1487.0,976.7 L1488.9,1045.2 L1497.4,1045.2 L1498.1,963.0 L1501.9,963.0 L1503.7,1045.2 L1507.4,1045.2 L1508.5,952.6 L1511.1,952.6 L1513.7,960.0 L1516.7,958.1 L1518.5,1045.2 L1536.3,1045.2 L1537.4,980.4 L1540.7,980.4 L1542.6,1041.5 L1546.3,1041.5 L1548.1,1010.0 L1551.9,1010.0 L1554.4,1015.6 L1561.1,1015.6 L1563.0,1037.8 L1579.6,1037.8 L1582.2,961.9 L1585.9,960.0 L1587.8,971.1 L1590.7,973.0 L1593.3,985.9 L1595.2,985.9 L1597.4,1039.6 L1614.8,1037.8 L1616.7,991.5 L1619.6,991.5 L1622.2,965.6 L1624.8,961.9 L1627.0,708.1 L1630.4,673.0 L1632.2,750.7 L1635.2,752.6 L1637.0,758.1 L1639.6,760.0 L1641.5,778.5 L1645.2,778.5 L1646.3,904.4 L1650.0,950.7 L1651.9,989.6 L1655.6,991.5 L1657.4,1006.3 L1659.3,1002.6 L1664.1,1000.7 L1665.9,1006.3 L1670.4,1008.1 L1672.2,1002.6 L1675.2,1000.7 L1676.7,997.0 L1683.3,997.8 L1685.2,1002.6 L1688.9,1004.4 L1692.6,1048.9 L1695.2,1011.9 L1703.7,1011.9 L1705.6,1017.4 L1709.3,1015.6 L1713.0,1017.4 L1718.5,1019.3 L1722.2,1019.3 L1727.0,1021.1 L1729.6,1015.6 L1733.3,1015.6 L1735.2,897.0 L1753.0,897.0 L1755.6,991.5 L1757.4,987.8 L1759.3,1045.2 L1768.5,1045.2 L1770.4,964.4 L1773.0,964.4 L1775.2,985.9 L1778.9,987.8 L1782.2,982.2 L1785.2,977.8 L1787.8,977.8 L1790.0,991.5 L1793.7,993.3 L1795.6,997.0 L1798.1,1004.4 L1800.0,1004.4" stroke="#e24d42" stroke-width="1.4" fill="none" stroke-linejoin="round"/></svg>
<svg class="b" style="left:114px;top:113px" width="80" height="560" viewBox="114 113 80 560">
<defs>
<linearGradient id="lg" x1="0" y1="0" x2="0" y2="1"><stop offset="0" stop-color="#ef5127"/><stop offset="0.3" stop-color="#f05f27"/><stop offset="0.6" stop-color="#f4921e"/><stop offset="1" stop-color="#fbd20b"/></linearGradient>
<filter id="gb" x="-50%" y="-50%" width="200%" height="200%"><feGaussianBlur stdDeviation="2.5"/></filter>
<radialGradient id="cg" cx="0.5" cy="0.5" r="0.5"><stop offset="0" stop-color="#1c1d21"/><stop offset="0.6" stop-color="#1a1b1f"/><stop offset="1" stop-color="#17181c" stop-opacity="0"/></radialGradient>
</defs>
<!-- grafana logo -->
<g transform="translate(125,115) scale(0.05092)">
 <path fill="url(#lg)" stroke="url(#lg)" stroke-width="36" stroke-linejoin="round" d="M520,140 L605,205 L765,228 L795,305 Q850,400 875,515 L815,600 L855,730 L755,835 L645,935 L470,875 L297,900 L255,765 L110,640 L225,445 L190,280 L415,240 Z"/>
 <path d="M700,688 A195 195 0 1 1 748,450 Q800,470 900,560" fill="none" stroke="#16181b" stroke-width="108"/>
 <circle cx="592" cy="578" r="98" fill="#16181b"/>
 <path d="M690,650 A115 115 0 0 1 600,690" stroke="#16181b" stroke-width="36" fill="none"/>
</g>
<g fill="none" stroke="#a1a5b0" stroke-width="2.6" stroke-linecap="round" stroke-linejoin="round">
 <!-- search -->
 <circle cx="152.4" cy="265.6" r="10.6"/>
 <path d="M160.3 273.6 L166.6 280"/>
 <!-- plus -->
 <path d="M154 317 V338 M143.4 327.4 H164.4"/>
 <!-- grid -->
 <rect x="141.3" y="375.2" width="10" height="10" rx="1.3"/>
 <rect x="156.4" y="375.2" width="10" height="10" rx="1.3"/>
 <rect x="141.3" y="390.4" width="10" height="10" rx="1.3"/>
 <rect x="156.4" y="390.4" width="10" height="10" rx="1.3"/>
 <!-- compass -->
 <circle cx="153.9" cy="448.6" r="12.6"/>
 <path d="M153.9 436.5 V439 M153.9 458.2 V460.7 M141.8 448.6 H144.3 M163.5 448.6 H166"/>
</g>
<path d="M159.6 443.1 L156.1 450.8 L148.4 454.3 L151.9 446.6 Z" fill="#a1a5b0" stroke="#a1a5b0" stroke-width="1.3" stroke-linejoin="round"/>
<!-- bell -->
<g fill="none" stroke="#a1a5b0" stroke-width="2.6" stroke-linecap="round" stroke-linejoin="round">
 <path d="M146.5 514 V506 A7.7 7.7 0 0 1 161.9 506 V514"/>
 <path d="M154.2 496 V498.3"/>
 <rect x="143.6" y="513.8" width="21.2" height="4.6" rx="1.5"/>
 <path d="M150.8 519.4 A3.5 3.5 0 0 0 157.6 519.4"/>
</g>
<!-- cloud alert glow -->
<circle cx="154" cy="571" r="40" fill="url(#cg)"/>
<circle cx="154" cy="571" r="19" fill="#15171a" filter="url(#gb)"/>
<g transform="translate(120,535) scale(0.06944)" fill="none" stroke="#a4a8b3" stroke-width="52" stroke-linecap="round" stroke-linejoin="round">
 <path d="M375,690 L310,690 C250,690 232,625 242,582 C252,535 285,512 322,505 C332,420 400,352 490,352 C570,352 622,400 642,458 C700,472 745,522 740,587 C735,652 680,690 600,690"/>
 <path d="M490,475 V598"/>
</g>
<circle cx="154.03" cy="582.6" r="1.9" fill="#a4a8b3"/>
<!-- gear -->
<g transform="translate(154.2,630)" fill="none" stroke="#a1a5b0" stroke-width="2.5" stroke-linejoin="round">
 <path d="M-2.6,-13.2 L2.6,-13.2 L3.5,-9.4 L6.6,-7.6 L10.4,-8.8 L13,-4.3 L10.1,-1.6 L10.1,1.6 L13,4.3 L10.4,8.8 L6.6,7.6 L3.5,9.4 L2.6,13.2 L-2.6,13.2 L-3.5,9.4 L-6.6,7.6 L-10.4,8.8 L-13,4.3 L-10.1,1.6 L-10.1,-1.6 L-13,-4.3 L-10.4,-8.8 L-6.6,-7.6 L-3.5,-9.4 Z"/>
 <circle cx="0" cy="0" r="4.3"/>
</g>
</svg>

</div>
<svg class="b" style="left:1290px;top:55px" width="600" height="290" viewBox="1290 55 600 290">
<defs>
 <clipPath id="c1"><circle cx="1437.1" cy="198.9" r="112.6"/></clipPath>
 <clipPath id="c2"><circle cx="1735.2" cy="198.9" r="112.6"/></clipPath>
 <filter id="b8" x="-30%" y="-30%" width="160%" height="160%"><feGaussianBlur stdDeviation="8"/></filter>
 <filter id="b2" x="-20%" y="-20%" width="140%" height="140%"><feGaussianBlur stdDeviation="2"/></filter>
 <filter id="b1" x="-20%" y="-20%" width="140%" height="140%"><feGaussianBlur stdDeviation="1"/></filter>
 <filter id="sh" x="-30%" y="-30%" width="160%" height="160%"><feGaussianBlur stdDeviation="6"/></filter>
 <linearGradient id="sky1" x1="0" y1="0" x2="0" y2="1">
  <stop offset="0" stop-color="#bcd3ea"/><stop offset="0.22" stop-color="#a3bad0"/><stop offset="0.45" stop-color="#8ba39b"/><stop offset="0.7" stop-color="#7a9474"/><stop offset="1" stop-color="#6c7c66"/>
 </linearGradient>
 <radialGradient id="face1" cx="0.5" cy="0.5" r="0.55"><stop offset="0" stop-color="#dc9a7c"/><stop offset="0.75" stop-color="#cd8769"/><stop offset="1" stop-color="#b06e55"/></radialGradient>
 <radialGradient id="face2" cx="0.5" cy="0.45" r="0.55"><stop offset="0" stop-color="#eed3c8"/><stop offset="0.75" stop-color="#e2bcae"/><stop offset="1" stop-color="#c9a091"/></radialGradient>
 <linearGradient id="hair2" x1="0" y1="0" x2="0" y2="1"><stop offset="0" stop-color="#6f625d"/><stop offset="0.22" stop-color="#5a4439"/><stop offset="0.5" stop-color="#4f372b"/><stop offset="1" stop-color="#553b2d"/></linearGradient>
</defs>
<circle cx="1437.1" cy="200.5" r="123.6" fill="rgba(100,45,15,0.22)" filter="url(#sh)"/>
<circle cx="1735.2" cy="200.5" r="123.6" fill="rgba(100,45,15,0.22)" filter="url(#sh)"/>
<circle cx="1437.1" cy="198.9" r="123.6" fill="#f9c35a"/>
<circle cx="1735.2" cy="198.9" r="123.6" fill="#f9c35a"/>

<!-- ===== avatar 1 ===== -->
<g clip-path="url(#c1)">
 <rect x="1320" y="84" width="236" height="232" fill="url(#sky1)"/>
 <g filter="url(#b8)">
  <ellipse cx="1345" cy="215" rx="22" ry="50" fill="#758f70"/>
  <ellipse cx="1530" cy="180" rx="22" ry="35" fill="#7e9c7c"/>
  <rect x="1522" y="198" width="40" height="50" fill="#d6b8c0"/>
  <ellipse cx="1345" cy="150" rx="25" ry="25" fill="#8aa0b0"/>
 </g>
 <!-- hair mass -->
 <path filter="url(#b1)" fill="#2f241f" d="M1344,318 L1344,262 C1348,235 1355,212 1362,195 C1366,170 1372,140 1389,115 C1402,98 1420,88 1442,86 C1470,88 1493,112 1507,149 C1516,170 1525,190 1530,215 C1535,240 1532,258 1521,275 L1480,300 L1400,318 Z"/>
 <path d="M1352,300 C1356,270 1360,245 1368,225 M1372,290 C1373,265 1376,245 1380,230 M1515,240 C1512,225 1508,210 1503,200" stroke="#5a4034" stroke-width="3" fill="none" filter="url(#b1)"/>
 <!-- neck -->
 <path d="M1405,240 L1480,236 L1494,251 L1436,303 L1436,320 L1400,320 L1406,305 L1422,270 L1414,262 Z" fill="#c98a6e"/>
 <path d="M1412,250 Q1435,262 1458,250 L1470,262 Q1440,275 1412,262 Z" fill="#b57459" filter="url(#b2)"/>
 <!-- shirt -->
 <path d="M1413,270 L1423,271 L1407,305 L1398,318 L1388,318 Z" fill="#e5341b"/>
 <path d="M1492.8,250.5 L1506,258 L1521,273 L1552,320 L1428,320 L1435,301.7 Z" fill="#e8371c"/>
 <circle cx="1436" cy="309" r="3" fill="#e8e0e8"/>
 <!-- face -->
 <path filter="url(#b1)" fill="url(#face1)" d="M1431,113 C1440,112 1446,114 1450,117 C1460,128 1466,140 1470,150 C1478,165 1484,178 1484,192 C1482,210 1478,228 1468,242 C1460,252 1445,257 1430,257 C1418,256 1408,250 1400,240 C1392,230 1386,215 1383,198 C1382,180 1385,165 1389,152 C1392,138 1400,125 1412,118 C1418,115 1424,113 1431,113 Z"/>
 <ellipse cx="1497" cy="185" rx="6" ry="10" fill="#c07a5c"/>
 <!-- brows/eyes -->
 <path d="M1388,160 Q1402,155 1417,160 M1437,160 Q1453,156 1468,162" stroke="#3f2a22" stroke-width="3.2" fill="none" stroke-linecap="round"/>
 <ellipse cx="1406" cy="168" rx="7.5" ry="2.8" fill="#553a2e"/>
 <ellipse cx="1451" cy="170" rx="7.5" ry="2.8" fill="#553a2e"/>
 <ellipse cx="1432" cy="185" rx="7" ry="12" fill="#e0a285" filter="url(#b2)"/>
 <path d="M1422,196 Q1432,203 1443,197" stroke="#a9634a" stroke-width="3" fill="none" filter="url(#b1)"/>
 <!-- mouth -->
 <path d="M1403,212 Q1428,206 1454,211 Q1445,229 1428,229 Q1410,228 1403,212 Z" fill="#a84b48"/>
 <path d="M1408,214 Q1428,210 1450,213 Q1442,222 1428,222 Q1414,221 1408,214 Z" fill="#efe9e2"/>
</g>

<!-- ===== avatar 2 ===== -->
<g clip-path="url(#c2)">
 <rect x="1618" y="84" width="236" height="232" fill="#31462a"/>
 <g filter="url(#b8)">
  <rect x="1618" y="84" width="236" height="50" fill="#2b3c24"/>
  <ellipse cx="1640" cy="212" rx="22" ry="40" fill="#55803d"/>
  <ellipse cx="1830" cy="195" rx="14" ry="32" fill="#50744a"/>
  <ellipse cx="1835" cy="255" rx="20" ry="25" fill="#283820"/>
  <ellipse cx="1775" cy="110" rx="30" ry="20" fill="#3d5a33"/>
 </g>
 <!-- jacket bottom-left -->
 <path d="M1625,245 L1662,240 L1670,300 L1640,300 Z" fill="#8a7b73" filter="url(#b2)"/>
 <!-- hair mass -->
 <path filter="url(#b1)" fill="url(#hair2)" d="M1640,318 L1648,262 C1652,240 1656,215 1659,195 C1661,170 1665,150 1675,130 C1690,105 1712,94 1738,94 C1762,96 1780,112 1793,137 C1803,160 1808,185 1810,205 C1814,228 1826,245 1836,262 C1836,285 1820,305 1800,318 Z"/>
 <path d="M1655,305 C1658,275 1662,250 1668,225 M1668,310 C1672,285 1676,265 1684,248" stroke="#a3805f" stroke-width="9" fill="none" filter="url(#b2)"/>
 <path d="M1762,225 C1770,250 1785,275 1800,292" stroke="#b08a66" stroke-width="5" fill="none" filter="url(#b2)"/>
 <!-- neck/chest -->
 <path d="M1696,250 L1762,245 L1768,318 L1694,318 Z" fill="#c49a8a"/>
 <path d="M1696,255 Q1720,272 1755,252 L1756,272 Q1722,288 1696,270 Z" fill="#a87c6c" filter="url(#b2)"/>
 <!-- face -->
 <path filter="url(#b1)" fill="url(#face2)" d="M1718,128 C1730,128 1740,135 1745,145 C1752,158 1758,175 1760,192 C1762,210 1758,230 1748,248 C1740,258 1725,263 1710,262 C1698,260 1688,254 1682,245 C1676,232 1673,215 1673,200 C1673,182 1677,165 1685,152 C1692,138 1705,128 1718,128 Z"/>
 <path d="M1685,164 Q1698,159 1710,165 M1733,170 Q1744,167 1753,173" stroke="#5e4436" stroke-width="2.6" fill="none" stroke-linecap="round"/>
 <ellipse cx="1697" cy="176.5" rx="7.5" ry="3" fill="#5e4e4a"/>
 <ellipse cx="1743" cy="182" rx="7.5" ry="3" fill="#5e4e4a"/>
 <path d="M1702,208 Q1714,216 1728,210" stroke="#c99a8a" stroke-width="3" fill="none" filter="url(#b1)"/>
 <path d="M1689,220 Q1712,220 1735,226 Q1728,240 1710,240 Q1694,238 1689,220 Z" fill="#d68e8c"/>
 <path d="M1694,223 Q1712,223 1731,228 Q1724,234 1712,234 Q1700,232 1694,223 Z" fill="#f4eeea"/>
</g>
</svg>


</body></html>
